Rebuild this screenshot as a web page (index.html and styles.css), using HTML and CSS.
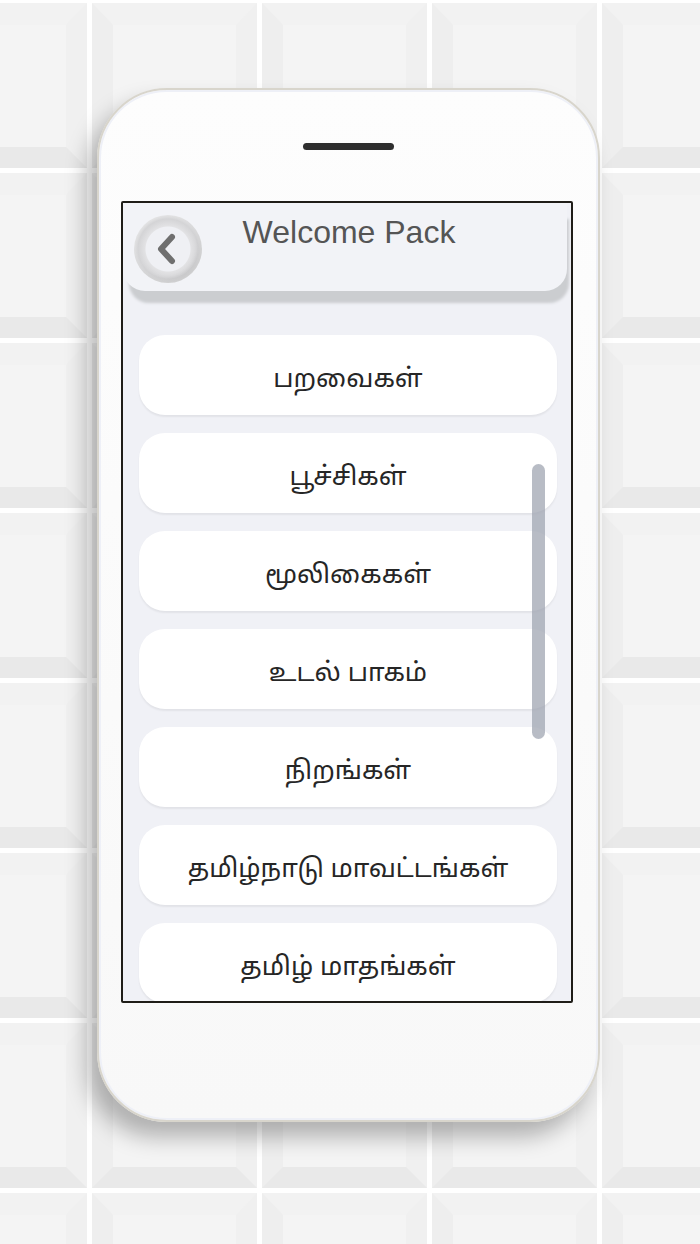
FILE: index.html
```html
<!DOCTYPE html>
<html>
  <head>
    <title>Welcome Pack</title>
    <link rel="stylesheet" href="styles.css">
  </head>
  <body>
    <div class="scene">
      <div class="tiles">
        <div class="tile"></div><div class="tile"></div><div class="tile"></div><div class="tile"></div><div class="tile"></div>
        <div class="tile"></div><div class="tile"></div><div class="tile"></div><div class="tile"></div><div class="tile"></div>
        <div class="tile"></div><div class="tile"></div><div class="tile"></div><div class="tile"></div><div class="tile"></div>
        <div class="tile"></div><div class="tile"></div><div class="tile"></div><div class="tile"></div><div class="tile"></div>
        <div class="tile"></div><div class="tile"></div><div class="tile"></div><div class="tile"></div><div class="tile"></div>
        <div class="tile"></div><div class="tile"></div><div class="tile"></div><div class="tile"></div><div class="tile"></div>
        <div class="tile"></div><div class="tile"></div><div class="tile"></div><div class="tile"></div><div class="tile"></div>
        <div class="tile"></div><div class="tile"></div><div class="tile"></div><div class="tile"></div><div class="tile"></div>
      </div>

      <div class="phone">
        <div class="speaker"></div>
        <div class="screen">
          <div class="header">
            <button class="back" type="button">
              <svg width="68" height="68" viewBox="0 0 68 68">
                <polyline points="38,22 27,34 38,46" fill="none" stroke="#6f6f6f" stroke-width="6" stroke-linecap="round" stroke-linejoin="round" />
              </svg>
            </button>
            <h1 class="title">Welcome Pack</h1>
          </div>
          <ul class="menu">
            <li>பறவைகள்</li>
            <li>பூச்சிகள்</li>
            <li>மூலிகைகள்</li>
            <li>உடல் பாகம்</li>
            <li>நிறங்கள்</li>
            <li>தமிழ்நாடு மாவட்டங்கள்</li>
            <li>தமிழ் மாதங்கள்</li>
          </ul>
          <div class="scrollbar"></div>
        </div>
      </div>
    </div>
  </body>
</html>
```

FILE: styles.css
```css
body {
  margin: 0;
  background-color: #ffffff;
  font-family: "Liberation Sans", Arial, sans-serif;
  overflow: hidden;
}

.scene {
  display: grid;
  width: 700px;
  height: 1244px;
  overflow: hidden;
}

/* wall of bevelled tiles behind the phone */
.tiles {
  grid-area: 1 / 1;
  display: grid;
  grid-template-columns: repeat(5, 165px);
  grid-auto-rows: 165px;
  gap: 5px;
  margin-left: -78px;
  margin-top: 3px;
}

.tile {
  box-sizing: border-box;
  background-color: #f4f4f4;
  border-style: solid;
  border-width: 22px 21px 21px 21px;
  border-color: #f2f2f2 #f0f0f0 #e9e9e9 #eeeeee;
}

.phone {
  grid-area: 1 / 1;
  align-self: start;
  justify-self: start;
  box-sizing: border-box;
  width: 503px;
  height: 1034px;
  margin-left: 97px;
  margin-top: 88px;
  display: flex;
  flex-direction: column;
  align-items: center;
  background: linear-gradient(#fdfdfd, #f8f8f8);
  border: 2px solid #d8d5cc;
  border-radius: 70px;
  box-shadow: inset 0 0 0 2px #eef0f7, -10px 15px 22px rgba(0, 0, 0, 0.28);
}

.speaker {
  width: 91px;
  height: 7px;
  margin-top: 53px;
  background-color: #2e2e2e;
  border-radius: 4px;
}

.screen {
  position: relative;
  box-sizing: border-box;
  align-self: flex-start;
  width: 452px;
  height: 802px;
  margin-top: 51px;
  margin-left: 22px;
  background-color: #f0f1f6;
  border: 2px solid #1f1d18;
  border-radius: 2px;
  overflow: hidden;
}

.header {
  display: grid;
  grid-template-columns: 1fr auto 1fr;
  align-items: start;
  width: 444px;
  height: 88px;
  background-color: #f2f3f7;
  border-radius: 0 0 22px 22px;
  box-shadow: 4px 14px 3px -2px #cbcdd0;
}

.back {
  width: 68px;
  height: 68px;
  margin: 12px 0 0 11px;
  padding: 0;
  border: none;
  border-radius: 50%;
  background: radial-gradient(circle at 50% 50%, #eff0f4 0, #eff0f4 22px, #e2e2e4 23px, #d4d4d6 30px, #e6e6e7 34px);
  box-shadow: inset -2px -3px 5px rgba(0, 0, 0, 0.1);
  cursor: pointer;
}

.back svg {
  display: block;
}

.title {
  margin: 13px 0 0;
  padding-left: 8px;
  font-size: 32px;
  font-weight: normal;
  line-height: 1;
  color: #555555;
}

.menu {
  list-style: none;
  margin: 0;
  padding: 44px 0 0 16px;
  display: flex;
  flex-direction: column;
  gap: 18px;
}

.menu li {
  box-sizing: border-box;
  display: flex;
  align-items: center;
  justify-content: center;
  width: 418px;
  height: 80px;
  padding-top: 10px;
  flex-shrink: 0;
  background-color: #ffffff;
  border-radius: 26px;
  box-shadow: 0 2px 2px rgba(0, 0, 0, 0.06);
  font-family: "Noto Sans Tamil", "Lohit Tamil", "Noto Sans", sans-serif;
  font-size: 26px;
  color: #262626;
}

.scrollbar {
  position: absolute;
  left: 409px;
  top: 261px;
  width: 13px;
  height: 275px;
  border-radius: 7px;
  background-color: rgba(160, 166, 178, 0.75);
}
```
